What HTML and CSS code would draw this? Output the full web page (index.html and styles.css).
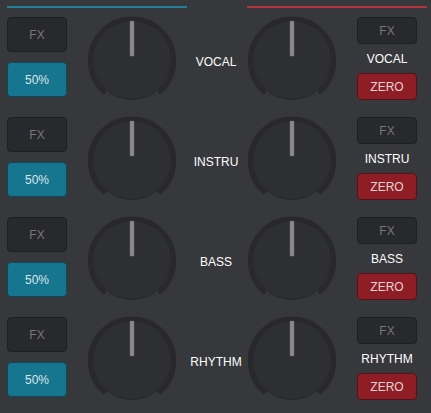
FILE: index.html
```html
<!DOCTYPE html>
<html>
<head>
<meta charset="utf-8">
<link rel="stylesheet" href="styles.css">
</head>
<body>
<div class="deck">
  <div class="topbar">
    <div class="line line-blue"></div>
    <div class="line line-red"></div>
  </div>

  <div class="row">
    <div class="col-left">
      <button class="btn btn-fx">FX</button>
      <button class="btn btn-pct">50%</button>
    </div>
    <svg class="knob knob-left" viewBox="0 0 88 88" width="88" height="88"><path class="ring" d="M17.2 77.1 A42 42 0 1 1 70.8 77.1"/><circle class="cap" cx="44" cy="44" r="39.5"/><rect class="ind" x="42" y="5" width="4" height="35"/></svg>
    <div class="label">VOCAL</div>
    <svg class="knob" viewBox="0 0 88 88" width="88" height="88"><path class="ring" d="M17.2 77.1 A42 42 0 1 1 70.8 77.1"/><circle class="cap" cx="44" cy="44" r="39.5"/><rect class="ind" x="42" y="5" width="4" height="35"/></svg>
    <div class="col-right">
      <button class="btn btn-fx small">FX</button>
      <div class="rlabel">VOCAL</div>
      <button class="btn btn-zero small">ZERO</button>
    </div>
  </div>

  <div class="row">
    <div class="col-left">
      <button class="btn btn-fx">FX</button>
      <button class="btn btn-pct">50%</button>
    </div>
    <svg class="knob knob-left" viewBox="0 0 88 88" width="88" height="88"><path class="ring" d="M17.2 77.1 A42 42 0 1 1 70.8 77.1"/><circle class="cap" cx="44" cy="44" r="39.5"/><rect class="ind" x="42" y="5" width="4" height="35"/></svg>
    <div class="label">INSTRU</div>
    <svg class="knob" viewBox="0 0 88 88" width="88" height="88"><path class="ring" d="M17.2 77.1 A42 42 0 1 1 70.8 77.1"/><circle class="cap" cx="44" cy="44" r="39.5"/><rect class="ind" x="42" y="5" width="4" height="35"/></svg>
    <div class="col-right">
      <button class="btn btn-fx small">FX</button>
      <div class="rlabel">INSTRU</div>
      <button class="btn btn-zero small">ZERO</button>
    </div>
  </div>

  <div class="row">
    <div class="col-left">
      <button class="btn btn-fx">FX</button>
      <button class="btn btn-pct">50%</button>
    </div>
    <svg class="knob knob-left" viewBox="0 0 88 88" width="88" height="88"><path class="ring" d="M17.2 77.1 A42 42 0 1 1 70.8 77.1"/><circle class="cap" cx="44" cy="44" r="39.5"/><rect class="ind" x="42" y="5" width="4" height="35"/></svg>
    <div class="label">BASS</div>
    <svg class="knob" viewBox="0 0 88 88" width="88" height="88"><path class="ring" d="M17.2 77.1 A42 42 0 1 1 70.8 77.1"/><circle class="cap" cx="44" cy="44" r="39.5"/><rect class="ind" x="42" y="5" width="4" height="35"/></svg>
    <div class="col-right">
      <button class="btn btn-fx small">FX</button>
      <div class="rlabel">BASS</div>
      <button class="btn btn-zero small">ZERO</button>
    </div>
  </div>

  <div class="row">
    <div class="col-left">
      <button class="btn btn-fx">FX</button>
      <button class="btn btn-pct">50%</button>
    </div>
    <svg class="knob knob-left" viewBox="0 0 88 88" width="88" height="88"><path class="ring" d="M17.2 77.1 A42 42 0 1 1 70.8 77.1"/><circle class="cap" cx="44" cy="44" r="39.5"/><rect class="ind" x="42" y="5" width="4" height="35"/></svg>
    <div class="label">RHYTHM</div>
    <svg class="knob" viewBox="0 0 88 88" width="88" height="88"><path class="ring" d="M17.2 77.1 A42 42 0 1 1 70.8 77.1"/><circle class="cap" cx="44" cy="44" r="39.5"/><rect class="ind" x="42" y="5" width="4" height="35"/></svg>
    <div class="col-right">
      <button class="btn btn-fx small">FX</button>
      <div class="rlabel">RHYTHM</div>
      <button class="btn btn-zero small">ZERO</button>
    </div>
  </div>
</div>
</body>
</html>
```

FILE: styles.css
```css
html, body {
  margin: 0;
  padding: 0;
  background: #37383b;
  height: 100%;
}
body {
  font-family: "Liberation Sans", Arial, sans-serif;
  font-size: 12px;
}
.deck {
  padding-top: 6px;
}
.topbar {
  display: flex;
  height: 2px;
  margin-bottom: 8px;
}
.line {
  height: 2px;
  width: 180px;
}
.line-blue {
  margin-left: 7px;
  background: #1d8098;
}
.line-red {
  margin-left: 60px;
  background: #b3333b;
}
.row {
  display: flex;
  align-items: flex-start;
  height: 100px;
  padding-left: 7px;
}
.col-left {
  display: flex;
  flex-direction: column;
  gap: 10px;
  margin-top: 1px;
  width: 60px;
  flex: none;
}
.btn {
  box-sizing: border-box;
  width: 60px;
  height: 35px;
  border-radius: 4px;
  font-family: "Liberation Sans", Arial, sans-serif;
  font-size: 12px;
  padding: 0;
  margin: 0;
  display: flex;
  align-items: center;
  justify-content: center;
}
.btn.small {
  height: 27px;
}
.btn-fx {
  background: #28292c;
  border: 1px solid #1e1f21;
  color: #767779;
}
.btn-pct {
  background: #167690;
  border: 1px solid #0f4a5a;
  color: #dde4e6;
}
.btn-zero {
  background: #8e1d25;
  border: 1px solid #561217;
  color: #e7d3d6;
}
.knob {
  display: block;
  flex: none;
}
.knob-left {
  margin-left: 21px;
}
.ring {
  fill: none;
  stroke: #29292c;
  stroke-width: 4.5;
}
.cap {
  fill: #2e2f33;
  stroke: #26272a;
  stroke-width: 1;
}
.ind {
  fill: #8c8c8c;
  stroke: #6a6a6a;
  stroke-width: 0.5;
}
.label {
  width: 72px;
  flex: none;
  padding-left: 8px;
  box-sizing: border-box;
  text-align: center;
  color: #ffffff;
  margin-top: 39px;
  line-height: 14px;
  white-space: nowrap;
}
.col-right {
  margin-left: 21px;
  margin-top: 1px;
  width: 60px;
  flex: none;
  height: 83px;
  display: flex;
  flex-direction: column;
  justify-content: space-between;
  align-items: center;
}
.rlabel {
  color: #ffffff;
  line-height: 14px;
  white-space: nowrap;
}
```
